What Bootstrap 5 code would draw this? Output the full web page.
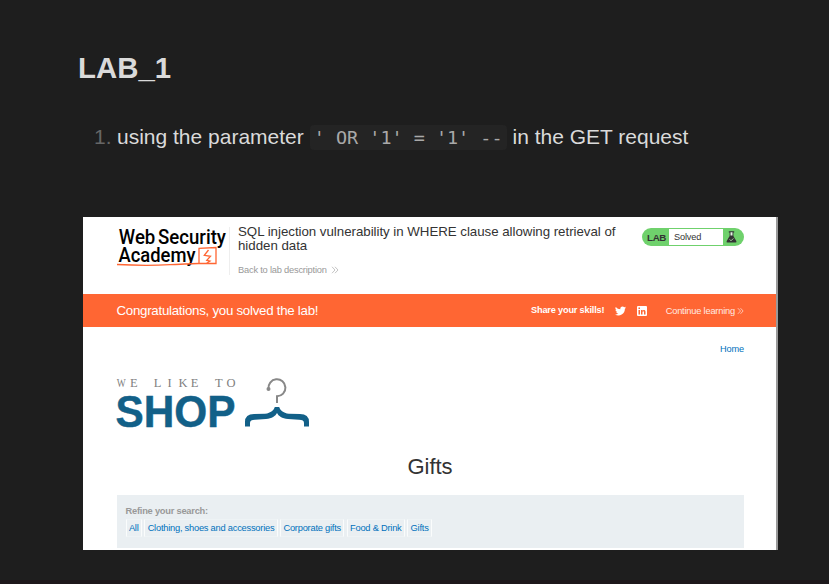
<!DOCTYPE html>
<html lang="en">
<head>
<meta charset="utf-8">
<title>LAB_1</title>
<link href="https://cdn.jsdelivr.net/npm/bootstrap@5.3.0/dist/css/bootstrap.min.css" rel="stylesheet">
<style>
body{background:#1e1e1e;color:#dadada;font-family:"Liberation Sans",Arial,sans-serif;width:829px;height:584px;overflow:hidden;border-bottom:4px solid #1d181b}
.note{padding:51px 51px 0 78px}
.note h1{font-size:29.4px;line-height:34px;height:34px}
.step{margin-top:37px;padding-left:16px;font-size:21px;line-height:30px;height:30px;white-space:pre}
.num{color:#666;width:23px}
.step code{font:18.45px/25px "DejaVu Sans Mono",monospace;color:#a9a9a9;background:#242424;border-radius:4px;padding:0 4px;height:25px;margin:3px 6px 0 6px}
.shot{margin:65px 0 0 83px;width:695px;height:333px;background:#fff;color:#333;border-right:2px solid #999}
.top-area{height:77px;padding:0 32px 0 34px}
.logo-svg{margin-top:8px;width:112px;height:52px;overflow:visible}
.title-block{border-left:1px solid #eee;margin:10px 0 0;padding-left:8px;height:48px;width:413px}
.title-block h2{font-size:13.3px;line-height:13.5px;letter-spacing:-.03px;color:#333;margin:-2px 0 0;white-space:nowrap}
.small-link{font-size:9.3px;letter-spacing:-.21px;line-height:12px;color:#999;text-decoration:none;white-space:nowrap}
.back-link{margin-top:12px}
.lab-pill{margin-top:11px;width:102px;height:18px;border-radius:9px;background:#6fd16c;color:#333;overflow:hidden}
.lab-pill b{width:27px;padding-left:5px;font-size:9.8px;letter-spacing:-.35px;line-height:19px}
.lab-pill span{width:54px;height:16px;background:#fff;padding-left:5px;line-height:17px;font-size:9.2px;letter-spacing:-.15px}
.banner{height:33px;background:#ff6633;color:#fff;padding:0 32px 0 33.5px}
.banner .msg{font-size:13.3px;letter-spacing:-.27px;line-height:33px}
.banner b{font-size:9.2px;letter-spacing:-.18px;line-height:12px;margin-top:-2px}
.tw{margin-left:10.3px}
.li{margin-left:11px}
.cl{margin-left:19px;color:#ffe9e1}
.cl svg{margin-left:2px}
.page-body{padding:0 32px 0 33px}
.home-link{color:#0071bc;font-size:9.2px;letter-spacing:-.1px;line-height:12px;text-decoration:none;margin-top:16px;height:12px}
.shop-svg{margin-top:20px;width:200px;height:56px;overflow:visible}
.page-body h3{font-size:22px;line-height:26px;margin:23px 0 0;color:#333}
.filters{background:#eaeff2;height:53px;margin:15px 0 0 1px;padding:10px 9px 0 8.5px;font-size:9.3px;letter-spacing:-.23px}
.filters b{color:#999;line-height:12px;height:12px}
.tags{gap:2.3px;margin-top:2px}
.tags a{color:#0071bc;text-decoration:none;border:1px solid #fafcfc;border-top-color:#eef3f5;border-bottom-color:#eef3f5;padding:0 2.4px;line-height:16px;height:18px;white-space:nowrap}
</style>
</head>
<body>
<header class="note">
  <h1 class="fw-bold m-0">LAB_1</h1>
  <div class="step d-flex"><span class="num">1.</span><span class="t1">using the parameter</span><code>' OR '1' = '1' --</code><span>in the GET request</span></div>
</header>
<main class="shot">
  <div class="top-area d-flex">
    <svg class="logo-svg flex-shrink-0" viewBox="117 225 112 52">
      <g font-family="Roboto,sans-serif" font-size="21" font-weight="500" fill="#000">
        <text x="118.800" y="244" textLength="36.500" lengthAdjust="spacingAndGlyphs">Web</text>
        <text x="158" y="244" textLength="68" lengthAdjust="spacingAndGlyphs">Security</text>
        <text x="118.500" y="262" textLength="77" lengthAdjust="spacingAndGlyphs">Academy</text>
      </g>
      <path d="M117 264.500Q145 266 170 264.700T199 263.500V248.300L216 247.500V263.500H199" fill="none" stroke="#f63" stroke-width="1.300"/>
      <path d="M208.500 250L204.300 255.300L210.500 256.300L206.800 260.300L210 261L206.500 263.500" fill="none" stroke="#f63" stroke-width="1.300"/>
    </svg>
    <div class="title-block">
      <h2 class="fw-normal">SQL injection vulnerability in WHERE clause allowing retrieval of<br>hidden data</h2>
      <a class="small-link back-link d-flex align-items-center" href="#">Back to lab description<svg class="ms-1" width="8" height="8" viewBox="0 0 8 8" fill="none" stroke="#aaa" stroke-width=".7"><path d="M1 .8L4 4L1 7.200M4 .8L7 4L4 7.200"/></svg></a>
    </div>
    <div class="lab-pill d-flex align-items-center flex-shrink-0 ms-auto"><b>LAB</b><span>Solved</span>
      <svg width="21" height="18" viewBox="0 0 21 18"><path d="M5.800 3.300H11.200V4.500H10.400V8L13.300 13Q14 14.500 12.500 14.500H4.500Q3 14.500 3.700 13L6.600 8V4.500H5.800Z" fill="#333"/><path d="M7.500 4.200H9.500V7.500H7.500Z" fill="#e5f6e5"/><path d="M6.500 11.500L8 12.700L10.500 10.500" fill="none" stroke="#b5ddb4" stroke-width=".8"/></svg>
    </div>
  </div>
  <div class="banner d-flex align-items-center">
    <span class="msg">Congratulations, you solved the lab!</span>
    <b class="ms-auto">Share your skills!</b>
    <svg class="tw" width="11" height="10" viewBox="0 0 24 20" fill="#fff"><path d="M24 2.400a10 10 0 0 1-2.800.8A5 5 0 0 0 23.300.5a10 10 0 0 1-3.100 1.200A4.900 4.900 0 0 0 11.800 6.200 14 14 0 0 1 1.700 1a4.900 4.900 0 0 0 1.500 6.600A5 5 0 0 1 1 7a4.900 4.900 0 0 0 3.900 4.900 5 5 0 0 1-2.200.1 4.900 4.900 0 0 0 4.600 3.400A10 10 0 0 1 0 17.500 14 14 0 0 0 21.500 5 10 10 0 0 0 24 2.400Z"/></svg>
    <svg class="li" width="10" height="10" viewBox="0 0 20 20"><rect width="20" height="20" rx="2" fill="#fff"/><path d="M3 8H6V17H3ZM3 3H6V6H3ZM8 8H11V9.300C13 6.900 17 7.500 17 11.500V17H14V12C14 9.800 11 9.800 11 12V17H8Z" fill="#f63"/></svg>
    <a class="small-link d-flex align-items-center cl" href="#">Continue learning<svg width="7" height="8" viewBox="0 0 8 8" fill="none" stroke="#fff" stroke-width=".7"><path d="M1 .8L4 4L1 7.200M4 .8L7 4L4 7.200"/></svg></a>
  </div>
  <div class="page-body">
    <a class="home-link d-block text-end" href="#">Home</a>
    <svg class="shop-svg d-block" viewBox="116 375 200 56">
      <g font-family="Liberation Serif,serif" font-size="12.500" fill="#808080">
        <text x="116.800" y="387" textLength="9" lengthAdjust="spacingAndGlyphs">W</text>
        <text y="387" x="130 142 153.800 167.500 178.500 190.800 203 215 226.500">E LIKE TO</text>
      </g>
      <text x="115.500" y="426.500" font-family="Liberation Sans,sans-serif" font-weight="bold" font-size="44.500" fill="#126088" stroke="#126088" stroke-width=".5" textLength="120" lengthAdjust="spacingAndGlyphs">SHOP</text>
      <path d="M268.500 389A8.500 8.500 0 1 1 277 396.300V403" fill="none" stroke="#888" stroke-width="2"/><circle cx="268.500" cy="389" r="2" fill="#888"/>
      <path d="M245 426.500V422Q245 414 254 414L265 413.800C271 413 274 410 274.800 407H279.200C280 410 283 413 289 413.800L300 414Q309 414 309 422V426.500H304V423Q304 419.800 299 419.800L288 419C282 418.500 278.500 416 277 413C275.500 416 272 418.500 266 419L255 419.800Q250 419.800 250 423V426.500Z" fill="#126088"/>
    </svg>
    <h3 class="fw-normal text-center">Gifts</h3>
    <div class="filters">
      <b class="d-block">Refine your search:</b>
      <nav class="tags d-flex"><a href="#">All</a><a href="#">Clothing, shoes and accessories</a><a href="#">Corporate gifts</a><a href="#">Food &amp; Drink</a><a href="#">Gifts</a></nav>
    </div>
  </div>
</main>
<script src="https://cdn.jsdelivr.net/npm/bootstrap@5.3.0/dist/js/bootstrap.bundle.min.js"></script>
</body>
</html>
